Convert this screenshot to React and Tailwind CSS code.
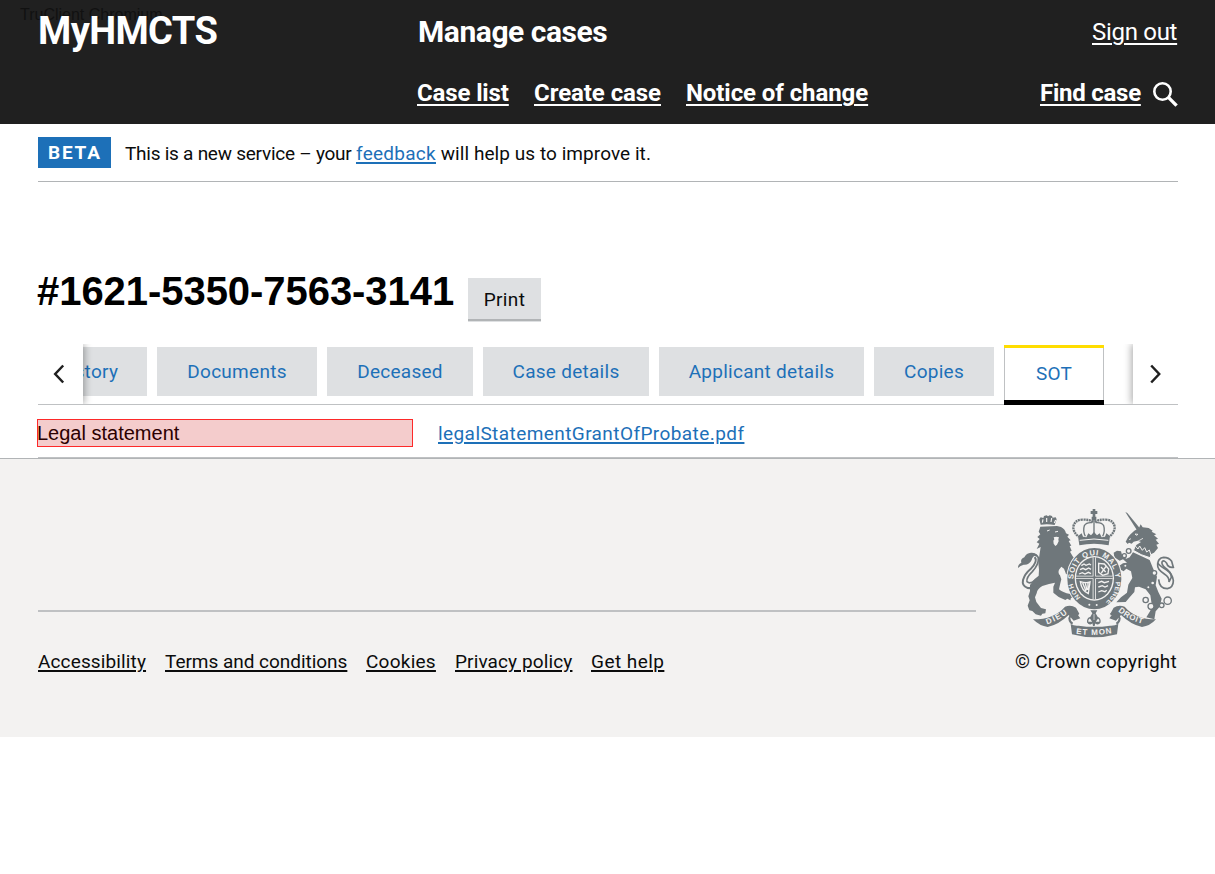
const TABS = [
  { label: "History", box: "w-[120px]" },
  { label: "Documents", box: "w-[160px]" },
  { label: "Deceased", box: "w-[146px]" },
  { label: "Case details", box: "w-[166px]" },
  { label: "Applicant details", box: "w-[205px]" },
  { label: "Copies", box: "w-[120px]" },
];

const FOOTER_LINKS = [
  { label: "Accessibility", box: "w-[108px] tracking-[0.13px]" },
  { label: "Terms and conditions", box: "w-[182px] tracking-[-0.03px]" },
  { label: "Cookies", box: "w-[70px] tracking-[0.25px]" },
  { label: "Privacy policy", box: "w-[117px] tracking-[0.12px]" },
  { label: "Get help", box: "w-[74px] tracking-[0.45px]" },
];

function Header() {
  return (
    <header className="relative flex h-[124px] bg-[#202020] pl-[38px] pr-[37px] font-bold text-white">
      <span className="absolute left-[20px] top-[6px] font-['Liberation_Sans',sans-serif] text-base leading-[18px] font-normal text-[#111111]">
        TruClient Chromium
      </span>
      <div className="relative w-[380px] pt-[8px] text-[38px] leading-[46px] tracking-[-0.6px]">MyHMCTS</div>
      <div className="flex flex-1 flex-col">
        <div className="flex h-[64px] items-center justify-between">
          <span className="text-[30px] leading-[36px] tracking-[-0.45px]">Manage cases</span>
          <a className="w-[86px] whitespace-nowrap text-2xl font-normal tracking-[-0.3px] underline decoration-2 underline-offset-[3px]">Sign out</a>
        </div>
        <nav className="-ml-px flex h-[58px] items-center text-2xl whitespace-nowrap">
          <a className="w-[92px] tracking-[-0.13px] underline decoration-2 underline-offset-[3px]">Case list</a>
          <a className="ml-[25px] w-[127px] tracking-[-0.07px] underline decoration-2 underline-offset-[3px]">Create case</a>
          <a className="ml-[25px] w-[182px] tracking-[-0.08px] underline decoration-2 underline-offset-[3px]">Notice of change</a>
          <a className="ml-auto w-[101px] tracking-[-0.25px] underline decoration-2 underline-offset-[3px]">Find case</a>
          <svg className="ml-[12px] mt-[3px] h-[25px] w-[25px]" viewBox="0 0 25 25" fill="none" stroke="white">
            <circle cx="9.5" cy="9.5" r="8.2" strokeWidth="2.6" />
            <path d="M15.4 15.4L23.6 23.6" strokeWidth="3.4" />
          </svg>
        </nav>
      </div>
    </header>
  );
}

function Chevron({ d }) {
  return (
    <svg className="h-[20px] w-[12px]" viewBox="0 0 12 20" fill="none" stroke="#202020" strokeWidth="2.5">
      <path d={d} />
    </svg>
  );
}

function Tabs() {
  return (
    <div className="flex h-[61px] border-b border-[#bfc1c3] text-[19px] tracking-[0.27px] text-[#1d70b8]">
      <div className="z-10 flex w-[45px] shrink-0 items-center pl-[15px] shadow-[2px_0_7px_rgba(0,0,0,0.3)] [clip-path:inset(0_-12px_0_0)]">
        <Chevron d="M10.2 1.5L2.2 10L10.2 18.5" />
      </div>
      <div className="-mb-px flex min-w-0 flex-1 justify-end gap-[10px] overflow-hidden pr-[29px] pt-px">
        {TABS.map((t) => (
          <div key={t.label} className={`mt-[2px] flex h-[49px] shrink-0 items-center justify-center whitespace-nowrap bg-[#dee0e2] pt-[2px] ${t.box}`}>
            {t.label}
          </div>
        ))}
        <div className="relative flex h-[60px] w-[100px] shrink-0 items-center justify-center border-x border-[#bfc1c3] bg-white pb-px">
          <span className="absolute -inset-x-px top-0 h-[3px] bg-[#ffdd00]" />
          <span className="absolute -inset-x-px bottom-0 h-[5px] bg-black" />
          SOT
        </div>
      </div>
      <div className="z-10 flex w-[45px] shrink-0 items-center pl-[16px] shadow-[-2px_0_7px_rgba(0,0,0,0.3)] [clip-path:inset(0_0_0_-12px)]">
        <Chevron d="M2.2 1.5L10.2 10L2.2 18.5" />
      </div>
    </div>
  );
}

function Crest() {
  return (
    <svg className="h-[130px] w-[158px]" viewBox="36 24 474 390" fill="#6f777b">
      <defs>
        <path id="garterTop" d="M205 238A63 72 0 0 1 331 238" />
        <path id="scrollLeft" d="M126 373Q160 363 193 336" />
        <path id="scrollMid" d="M213 401Q268 409 324 399" />
        <path id="scrollRight" d="M339 334Q370 360 418 373" />
      </defs>

      {/* lion */}
      <path d="M107 74l-4-16 4-6 8 2 2-6 8-2 4 3 5-3 7 2 2 5 9-1 3 6-6 17q-20-4-42-1z" />
      <path d="M112 68l2-10M125 66l0-12M138 66l2-12M148 69l4-9" fill="none" stroke="#f3f2f1" strokeWidth="3.5" />
      <path d="M106 80l50-2 12 3q12 6 15 19l9 4-5 6 10 11-6 2 8 14-5 1 6 14-5 3 8 14 12 14-12 16-6 18-5 8-9-3-6-16-8-6-7 9q-4 10 3 17l4 12-3 12-4 18q10 10 34 14l10 12-8-1-2 8-9-5-6 4-20-9-16-13 0-18 5-12-18 4-20 6q-15 8-17 22l-5 12 4 14 14 18 15 4-2 12-9 1-4 6-16-4-10-10-9-2-5-14 6-16-4-12 5-16 0-18 14-18 12-10 1-18-2-20 3-22 4-26-12 6 8-16-8-4 9-10-7-6 9-8-5-8z" />
      <path d="M146 112l8-2 8 2-2 6 1 6-5 10-5 4-5-7-1-9 3-4z" fill="#f3f2f1" />
      <path d="M126 93l8-3M150 96l9-2" fill="none" stroke="#f3f2f1" strokeWidth="3" />
      <path d="M102 246q-14 21-34 18-18-6-14-24 6-19 22-32 24-24 13-37" fill="none" stroke="#6f777b" strokeWidth="6" />
      <path d="M90 240q-14 14-24 5-3-12 16-30 20-22 18-42-6-12-20-8" fill="none" stroke="#6f777b" strokeWidth="5" />
      <path d="M39 204q-1-10 10-16-4-10 9-16 6-13 20-14 12-1 18 6-14 4-16 16-8 16-24 14-10 2-17 10z" />

      {/* royal crown */}
      <path d="M263 27h8v6h6v9h-6v8h-8v-8h-6v-9h6zM260 50h14v12h-14z" />
      <path d="M264 66q-10-8-32-7-24 1-27 22-1 15 16 29M270 66q10-8 32-7 24 1 27 22 1 15-16 29" fill="none" stroke="#6f777b" strokeWidth="7" strokeDasharray="6 2" />
      <path d="M262 68q-18-2-24 9-5 15 3 32M272 68q18-2 24 9 5 15-3 32M267 63v36" fill="none" stroke="#6f777b" strokeWidth="4" />
      <path d="M219 108l11-8 4 10 10 2 6-12 8 6 9-10 9 10 8-6 6 12 10-2 4-10 11 8-4 28q-44-9-88 0z" />
      <path d="M224 121q43-8 86 0" fill="none" stroke="#f3f2f1" strokeWidth="3" />

      {/* unicorn */}
      <path d="M361 36l6 3 37 45-8 7z" />
      <path d="M388 92l14-8 5-11 6 9 18 2 12 8-3 3 14 8-7 3 12 10-7 3 10 12-8 3 5 10-12 14-8 4-32-5-18-12 5-10 14-9-10-4-12 3-6 6-8-3-4 4-6-7 7-13 6-8z" />
      <path d="M390 102l9 1-5 3zM372 119l6-3M398 124l16-9" fill="none" stroke="#f3f2f1" strokeWidth="2.5" />
      <path d="M388 146l2-9 9 10 5-9 8 13 7-8 6 13 8-6 5 15-3 8q-28-7-50-22z" fill="#6f777b" stroke="#f3f2f1" strokeWidth="3" />
      <path d="M384 157L434 180L444 205L456 230L452 256L460 276L470 296L464 320L452 334L448 358L424 352L436 332L440 312L436 286L422 268L402 260L390 262L388 276L374 292L362 306L334 307L348 292L366 278L370 254L382 234L378 214L364 206L356 214L344 208L342 198L354 190L366 188L354 178L344 182L328 172L326 158L336 152L348 154L352 168L364 176L374 172z" />
      <path d="M461 238q2 28 26 28 18-4 18-24-2-20-20-32-24-14-28-22" fill="none" stroke="#6f777b" strokeWidth="5" />
      <path d="M492 246q2-14-14-24-22-14-20-28 0-20 18-22 16 0 24 12l5 18q-16 2-20-12-8-12-14-4-2 8 10 18 18 12 18 28z" fill="none" stroke="#6f777b" strokeWidth="5" />
      <g fill="#f3f2f1" stroke="#6f777b" strokeWidth="4">
        <circle cx="371" cy="153" r="7" />
        <circle cx="358" cy="167" r="6" />
        <circle cx="361" cy="197" r="5" />
        <circle cx="448" cy="219" r="7" />
        <circle cx="443" cy="249" r="6" />
        <circle cx="430" cy="262" r="5" />
        <circle cx="422" cy="300" r="8" />
        <circle cx="438" cy="319" r="9" />
        <circle cx="470" cy="316" r="7" />
        <circle cx="488" cy="302" r="11" />
      </g>

      {/* garter and shield */}
      <ellipse cx="268" cy="236" rx="84" ry="95" fill="#f3f2f1" />
      <ellipse cx="268" cy="236" rx="81" ry="92" />
      <ellipse cx="268" cy="235" rx="59" ry="67" fill="#f3f2f1" />
      <ellipse cx="268" cy="235" rx="55" ry="63" />
      <path d="M268 172v126M213 232h110" stroke="#f3f2f1" strokeWidth="10" />
      <path d="M268 172v126M213 232h110" stroke="#6f777b" strokeWidth="5" />
      <g fill="none" stroke="#f3f2f1" strokeWidth="4">
        <path d="M229 197l8-5 6 4 10-4 5 3M225 209l9-4 8 4 9-5 7 4M222 222l10-4 8 4 10-5 8 4" />
        <path d="M280 248l10-4 8 4 14-4M280 261l12-4 8 4 9-4M280 276l10-4 10 3 5-4" />
        <path d="M281 190l17 2 13 15-2 14-16 5-12-9zM288 201l14 15M303 199l-14 20" />
        <path d="M226 245q4 28 24 36l5-35q-12 4-29-1zM233 249l10 24M241 250l5 20M249 248v22" />
      </g>
      <g fill="#f3f2f1" fontFamily="Liberation Sans, sans-serif" fontWeight="700">
        <text fontSize="23"><textPath href="#garterTop" textLength="208" lengthAdjust="spacing">SOIT QUI MAL Y</textPath></text>
        <g fontSize="20">
          <text transform="translate(190 254) rotate(72)">H</text>
          <text transform="translate(197 273) rotate(62)">O</text>
          <text transform="translate(207 290) rotate(50)">N</text>
          <text transform="translate(332 245) rotate(92)">P</text>
          <text transform="translate(331 259) rotate(101)">E</text>
          <text transform="translate(327 273) rotate(111)">N</text>
          <text transform="translate(320 286) rotate(122)">S</text>
          <text transform="translate(311 298) rotate(132)">E</text>
        </g>
        <circle cx="253" cy="314" r="3" />
        <circle cx="275" cy="315" r="3" />
      </g>

      {/* motto scroll */}
      <path d="M84 358q64 0 96-38 18-7 33 3l10 18-5 3 8 11-20 7-15-17q-30 29-63 36-24-3-44-23z" />
      <path d="M453 358q-62 0-94-38-18-7-33 3l-10 18 5 3-8 11 20 7 15-17q30 29 63 36 24-3 42-23z" />
      <path d="M221 343q-24-5-28 12 1 12 10 16M316 343q24-5 28 12-1 12-10 16" fill="none" stroke="#6f777b" strokeWidth="6" />
      <path d="M197 372q11 7 24 5 47 7 94 0 14 1 25-6l-4 32q-68 18-135 0z" />
      <g fill="#f3f2f1" fontFamily="Liberation Sans, sans-serif" fontWeight="700" fontSize="24">
        <text><textPath href="#scrollLeft" textLength="70" lengthAdjust="spacing">DIEU</textPath></text>
        <text><textPath href="#scrollMid" textLength="108" lengthAdjust="spacing">ET MON</textPath></text>
        <text><textPath href="#scrollRight" textLength="82" lengthAdjust="spacing">DROIT</textPath></text>
      </g>

      {/* lily */}
      <path d="M256 331h21l-5 9 8 14-8 12h-10l-8-12 8-14z" />
      <path d="M263 367q-8 9-15-1-1-11 8-13 8 3 7 15M270 367q8 9 15-1 1-11-8-13-8 3-7 15" fill="none" stroke="#6f777b" strokeWidth="4" />
      <path d="M250 365h33v5h-33zM262 368h9l-2 10h-5z" />
      <path d="M267 342v18" stroke="#f3f2f1" strokeWidth="2" />
    </svg>
  );
}

function Footer() {
  return (
    <footer className="flex h-[279px] border-t border-[#b1b4b6] bg-[#f3f2f1] pl-[38px] pr-[37px] text-[19px] leading-[24px]">
      <div className="w-[938px] shrink-0 pt-[151px]">
        <div className="h-[2px] bg-[#bfc1c3]" />
        <div className="flex gap-[19px] whitespace-nowrap pt-[38px]">
          {FOOTER_LINKS.map((l) => (
            <a key={l.label} className={`underline decoration-2 underline-offset-[2px] ${l.box}`}>
              {l.label}
            </a>
          ))}
        </div>
      </div>
      <div className="flex flex-1 flex-col items-end pt-[49px]">
        <div className="mr-[3px]"><Crest /></div>
        <div className="w-[163px] whitespace-nowrap pt-[12px] tracking-[0.28px]">© Crown copyright</div>
      </div>
    </footer>
  );
}

export default function App() {
  return (
    <div className="min-h-[874px] overflow-hidden bg-white font-[Roboto,sans-serif] text-[#0b0c0c]">
      <Header />
      <main className="pl-[37px] pr-[36px]">
        <div className="mx-px flex h-[58px] items-center border-b border-[#b1b4b6] text-[19px] whitespace-pre">
          <strong className="mr-[14px] flex h-[31px] w-[73px] items-center bg-[#1d70b8] pl-[10px] pt-[2px] tracking-[1.8px] text-white">BETA</strong>
          <span className="pt-[3px] tracking-[-0.25px]">This is a new service – your </span>
          <a className="pt-[3px] tracking-[0.27px] text-[#1d70b8] underline decoration-2 underline-offset-[2px]">feedback</a>
          <span className="pt-[3px] tracking-[0.06px]"> will help us to improve it.</span>
        </div>
        <div className="flex h-[162px] items-start">
          <h1 className="mt-[86px] w-[431px] whitespace-nowrap font-['Liberation_Sans',sans-serif] text-[40px] leading-[46px] font-bold tracking-[-0.05px] text-black">
            #1621-5350-7563-3141
          </h1>
          <button className="mt-[96px] h-[43px] w-[73px] border-b-2 border-[#b1b4b6] bg-[#dee0e2] pt-[3px] text-[19px] tracking-[0.35px] shadow-[0_1px_0_#dee0e2]">Print</button>
        </div>
        <div className="mx-px">
          <Tabs />
        </div>
        <div className="flex h-[53px] items-start pt-[14px]">
          <div className="h-[28px] w-[376px] border border-[#ff0000]/80 bg-[#f4cccc] font-['Liberation_Sans',sans-serif] text-xl leading-[26px] text-[#2b0000]">
            <span className="-ml-px">Legal statement</span>
          </div>
          <a className="ml-[25px] text-[19px] leading-[30px] tracking-[0.42px] text-[#1d70b8] underline decoration-2 underline-offset-[2px]">
            legalStatementGrantOfProbate.pdf
          </a>
        </div>
        <div className="mx-px -mt-px h-px bg-[#bfc1c3]" />
      </main>
      <Footer />
    </div>
  );
}
